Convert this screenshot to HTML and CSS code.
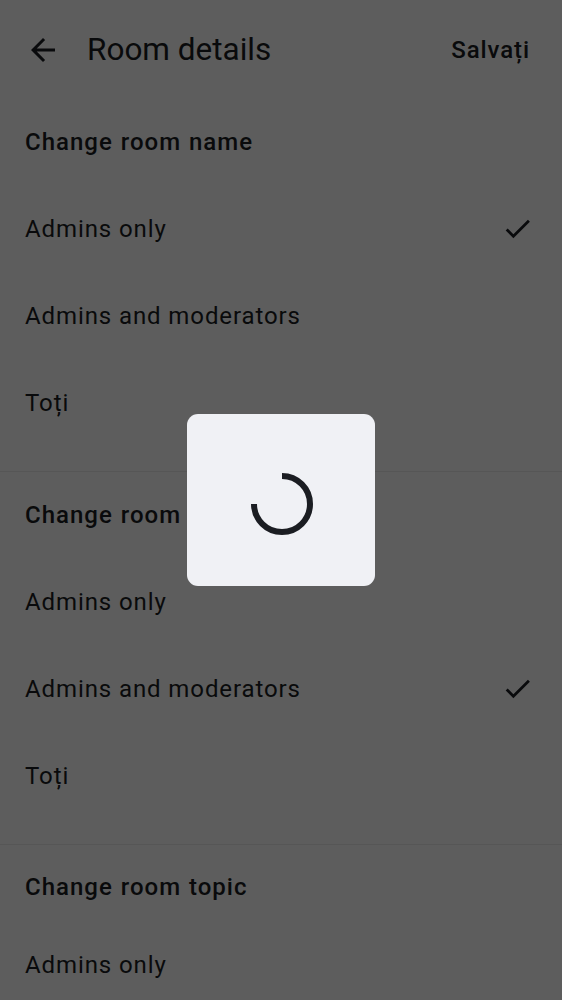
FILE: index.html
```html
<!DOCTYPE html>
<html lang="en">
<head>
<meta charset="utf-8">
<title>Room details</title>
<link rel="stylesheet" href="styles.css">
</head>
<body>
<div class="page">
  <header class="topbar">
    <button class="icon-btn" aria-label="Back">
      <svg class="icon" viewBox="0 0 24 24"><path d="M20 11H7.830l5.59-5.59L12 4l-8 8 8 8 1.41-1.41L7.83 13H20v-2z"/></svg>
    </button>
    <h1 class="title">Room details</h1>
    <span class="action">Salvați</span>
  </header>

  <section class="section">
    <div class="section-header">Change room name</div>
    <div class="item"><span>Admins only</span><svg class="check" viewBox="0 0 24 24"><path d="M9 16.17L4.83 12l-1.42 1.41L9 19 21 7l-1.41-1.41z"/></svg></div>
    <div class="item"><span>Admins and moderators</span></div>
    <div class="item"><span>Toți</span></div>
  </section>

  <section class="section">
    <div class="section-header">Change room avatar</div>
    <div class="item"><span>Admins only</span></div>
    <div class="item"><span>Admins and moderators</span><svg class="check" viewBox="0 0 24 24"><path d="M9 16.17L4.83 12l-1.42 1.41L9 19 21 7l-1.41-1.41z"/></svg></div>
    <div class="item"><span>Toți</span></div>
  </section>

  <section class="section">
    <div class="section-header section-header--tight">Change room topic</div>
    <div class="item"><span>Admins only</span></div>
    <div class="item"><span>Admins and moderators</span><svg class="check" viewBox="0 0 24 24"><path d="M9 16.17L4.83 12l-1.42 1.41L9 19 21 7l-1.41-1.41z"/></svg></div>
    <div class="item"><span>Toți</span></div>
  </section>
</div>

<div class="scrim">
  <div class="dialog" role="progressbar" aria-label="Loading">
    <svg class="spinner" viewBox="0 0 70 70"><path d="M35 7 A28 28 0 1 1 7 35"/></svg>
  </div>
</div>
</body>
</html>
```

FILE: styles.css
```css
* { box-sizing: border-box; }

html, body {
  margin: 0;
  padding: 0;
  height: 1000px;
  overflow: hidden;
}

body {
  background: #ffffff;
  font-family: Roboto, "Noto Sans", "Liberation Sans", sans-serif;
  color: #1b1d22;
}

.page {
  width: 562px;
}

.topbar {
  height: 99px;
  display: flex;
  align-items: center;
  padding: 0 32px 0 25px;
}

.icon-btn {
  width: 36px;
  height: 36px;
  padding: 0;
  margin: 0 26px 0 0;
  border: 0;
  background: none;
  display: flex;
}

.icon {
  width: 36px;
  height: 36px;
  fill: #1b1d22;
}

.title {
  flex: 1;
  margin: 0;
  font-size: 31.5px;
  font-weight: 400;
  line-height: 40px;
  letter-spacing: 0;
}

.action {
  font-size: 24px;
  font-weight: 500;
  letter-spacing: 0.9px;
}

.section {
  padding-bottom: 25px;
  border-bottom: 1px solid #ececec;
}

.section-header {
  height: 86px;
  display: flex;
  align-items: center;
  padding: 0 25px;
  font-size: 24px;
  font-weight: 500;
  letter-spacing: 1px;
  word-spacing: 1px;
}

.section-header--tight {
  height: 76px;
  padding-top: 8px;
}

.item {
  height: 87px;
  display: flex;
  align-items: center;
  justify-content: space-between;
  padding: 0 28px 0 25px;
  font-size: 24px;
  font-weight: 400;
  letter-spacing: 0.9px;
}

.check {
  width: 33px;
  height: 33px;
  fill: #1b1d22;
}

.scrim {
  position: fixed;
  inset: 0;
  background: rgba(0, 0, 0, 0.635);
  display: flex;
  align-items: center;
  justify-content: center;
}

.dialog {
  width: 188px;
  height: 172px;
  border-radius: 11px;
  background: #f0f1f5;
  display: flex;
  align-items: center;
  justify-content: center;
}

.spinner {
  width: 70px;
  height: 70px;
  margin: 8px 0 0 1px;
  fill: none;
  stroke: #1b1d22;
  stroke-width: 6;
}
```
